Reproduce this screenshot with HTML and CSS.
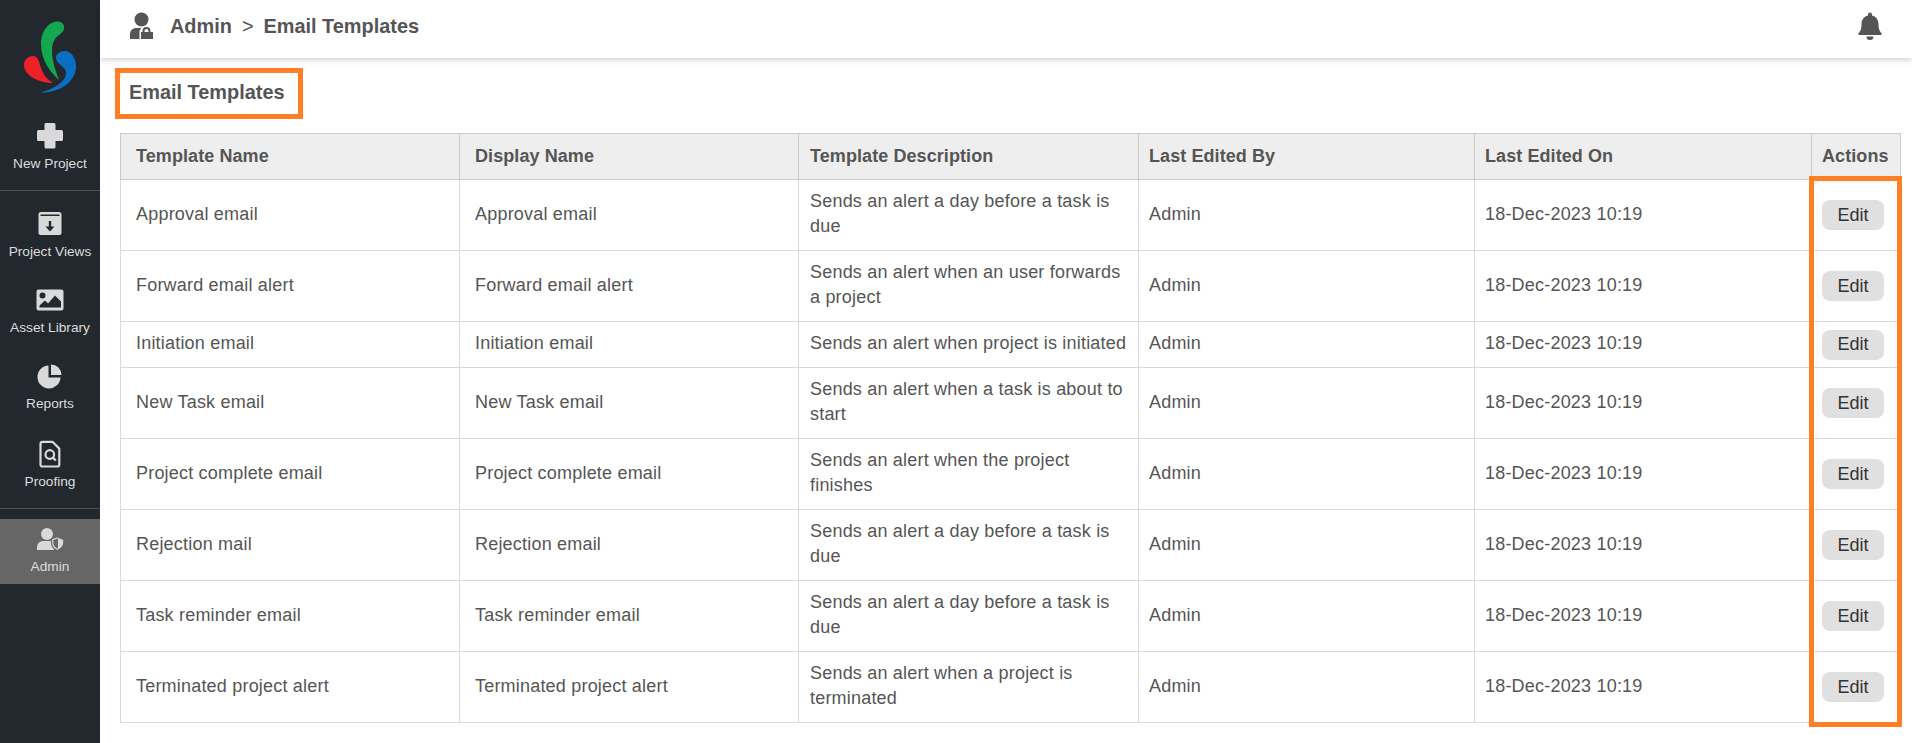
FILE: index.html
```html
<!DOCTYPE html>
<html lang="en">
<head>
<meta charset="utf-8">
<title>Email Templates</title>
<link rel="stylesheet" href="styles.css">
</head>
<body>
<div class="app">
  <aside class="sidebar">
    <div class="logo">
      <svg width="100" height="100" viewBox="0 0 100 100">
        <path fill="#13a84f" d="M58 21.500C62 21.500 65 25 64 29C63 33 58 35 55 39C50 46 51 60 59 80C50 72 41 60 41 44C41 32 48 21.500 58 21.500Z"/>
        <path fill="#ee2128" d="M24 65C24 59 29 56 33 56C37 56 39 60 40 65C42 72 46 79 53 83C40 83 24 76 24 65Z"/>
        <path fill="#0a6fc0" d="M56 57C57 52 62 51 66 51C72 52 76 59 76 66C76 82 60 93 40 92.500C52 90 66 82 66 73C66 66 55 64 56 57Z"/>
      </svg>
    </div>
    <a class="nav-item new">
      <svg class="nav-icon" width="28" height="28" viewBox="0 0 28 28"><path fill="#d9d9d9" d="M10 1h8a1.500 1.500 0 0 1 1.500 1.500V8h6A1.500 1.500 0 0 1 27 9.500v8a1.500 1.500 0 0 1-1.500 1.500h-6v6a1.500 1.500 0 0 1-1.500 1.500h-8A1.500 1.500 0 0 1 8.500 25v-6h-6A1.500 1.500 0 0 1 1 17.500v-8A1.500 1.500 0 0 1 2.500 8h6V2.500A1.500 1.500 0 0 1 10 1Z"/></svg>
      <span class="nav-label">New Project</span>
    </a>
    <div class="nav-group">
      <a class="nav-item">
        <svg class="nav-icon" width="28" height="28" viewBox="0 0 28 28"><path fill="#d9d9d9" d="M5 2h18a2.500 2.500 0 0 1 2.500 2.500V8h-23V4.500A2.500 2.500 0 0 1 5 2Z"/><path fill="#23282f" d="M4.500 4.500h19V6h-19z"/><path fill="#d9d9d9" fill-rule="evenodd" d="M2.500 8h23v15a2 2 0 0 1-2 2h-19a2 2 0 0 1-2-2ZM12.800 11v5.500H9.500l4.500 5 4.500-5h-3.300V11Z"/></svg>
        <span class="nav-label">Project Views</span>
      </a>
      <a class="nav-item">
        <svg class="nav-icon" width="28" height="28" viewBox="0 0 28 28"><path fill="#d9d9d9" fill-rule="evenodd" d="M2.500 3.500h23A2 2 0 0 1 27.500 5.500v17a2 2 0 0 1-2 2h-23a2 2 0 0 1-2-2v-17a2 2 0 0 1 2-2ZM6.500 6.500a3 3 0 1 0 0 6a3 3 0 0 0 0-6ZM3.500 21.500h21.500v-6l-6-6-7 8-3-3-5.500 5Z"/></svg>
        <span class="nav-label">Asset Library</span>
      </a>
      <a class="nav-item">
        <svg class="nav-icon" width="28" height="28" viewBox="0 0 28 28"><path fill="#d9d9d9" d="M12.500 3.500A11.500 11.500 0 1 0 24.500 15.500H12.500ZM15 2.500V13H25.500A10.500 10.500 0 0 0 15 2.500Z"/></svg>
        <span class="nav-label">Reports</span>
      </a>
      <a class="nav-item proofing">
        <svg class="nav-icon" width="28" height="28" viewBox="0 0 28 28"><path fill="none" stroke="#d9d9d9" stroke-width="2.200" stroke-linejoin="round" d="M6.500 1.800h10l6.800 6.800v15.900a2 2 0 0 1-2 2H6.500a2 2 0 0 1-2-2V3.800a2 2 0 0 1 2-2Z"/><circle cx="13.800" cy="14.500" r="4.300" fill="none" stroke="#d9d9d9" stroke-width="2.200"/><path stroke="#d9d9d9" stroke-width="2.400" d="M16.800 17.500l3 3"/></svg>
        <span class="nav-label">Proofing</span>
      </a>
    </div>
    <a class="nav-item active">
      <svg class="nav-icon" width="28" height="24" viewBox="0 0 28 24"><circle cx="11" cy="7" r="6" fill="#d9d9d9"/><path fill="#d9d9d9" d="M1 23v-3a6 6 0 0 1 6-6h8a6 6 0 0 1 3 .8V23Z"/><path fill="#666666" d="M22 9l7 2.500v4c0 4.500-3 7.500-7 9-4-1.500-7-4.500-7-9v-4Z"/><path fill="#d9d9d9" d="M22 11l5.200 1.800v2.700c0 3.300-2.200 5.700-5.200 7Z"/><path fill="none" stroke="#d9d9d9" stroke-width="1.200" d="M22 10.800l-5.300 1.900v2.800c0 3.400 2.200 5.800 5.300 7.100"/></svg>
      <span class="nav-label">Admin</span>
    </a>
  </aside>
  <div class="main">
    <header class="topbar">
      <div class="crumbs">
        <svg class="crumb-icon" width="24" height="28" viewBox="0 0 24 28"><circle cx="11.500" cy="7.500" r="7" fill="#555"/><path fill="#555" d="M0 27v-5c0-3.500 3-6 6-6h5.500c-1.300 1.200-2 2.500-2 4v7Z"/><path fill="#555" fill-rule="evenodd" d="M11 20h1.500v-1a4 4 0 0 1 8 0v1H23v7H11ZM14.500 20h4v-1a2 2 0 0 0-4 0Z"/></svg>
        <span>Admin</span><span class="sep">&gt;</span><span>Email Templates</span>
      </div>
      <svg class="bell" width="24" height="28" viewBox="0 0 24 28"><path fill="#555" d="M12 .500a2 2 0 0 1 2 2v1c4 .9 6.500 4.200 6.500 8.500 0 5 1 7 3 9.200.5.600.2 1.800-.8 1.800H1.300c-1 0-1.300-1.200-.8-1.800 2-2.200 3-4.200 3-9.200 0-4.300 2.500-7.600 6.500-8.500v-1a2 2 0 0 1 2-2ZM8.500 24.500h7a3.500 3.500 0 0 1-7 0Z"/></svg>
    </header>
    <h1 class="page-title">Email Templates</h1>
    <table class="grid">
      <colgroup>
        <col class="c-1"><col class="c-1"><col class="c-3"><col class="c-4"><col class="c-5"><col class="c-6">
      </colgroup>
      <thead>
        <tr><th>Template Name</th><th>Display Name</th><th>Template Description</th><th>Last Edited By</th><th>Last Edited On</th><th>Actions</th></tr>
      </thead>
      <tbody>
        <tr><td>Approval email</td><td>Approval email</td><td>Sends an alert a day before a task is due</td><td>Admin</td><td>18-Dec-2023 10:19</td><td><button class="edit">Edit</button></td></tr>
        <tr><td>Forward email alert</td><td>Forward email alert</td><td>Sends an alert when an user forwards a project</td><td>Admin</td><td>18-Dec-2023 10:19</td><td><button class="edit">Edit</button></td></tr>
        <tr><td>Initiation email</td><td>Initiation email</td><td>Sends an alert when project is initiated</td><td>Admin</td><td>18-Dec-2023 10:19</td><td><button class="edit">Edit</button></td></tr>
        <tr><td>New Task email</td><td>New Task email</td><td>Sends an alert when a task is about to start</td><td>Admin</td><td>18-Dec-2023 10:19</td><td><button class="edit">Edit</button></td></tr>
        <tr><td>Project complete email</td><td>Project complete email</td><td>Sends an alert when the project finishes</td><td>Admin</td><td>18-Dec-2023 10:19</td><td><button class="edit">Edit</button></td></tr>
        <tr><td>Rejection mail</td><td>Rejection email</td><td>Sends an alert a day before a task is due</td><td>Admin</td><td>18-Dec-2023 10:19</td><td><button class="edit">Edit</button></td></tr>
        <tr><td>Task reminder email</td><td>Task reminder email</td><td>Sends an alert a day before a task is due</td><td>Admin</td><td>18-Dec-2023 10:19</td><td><button class="edit">Edit</button></td></tr>
        <tr><td>Terminated project alert</td><td>Terminated project alert</td><td>Sends an alert when a project is terminated</td><td>Admin</td><td>18-Dec-2023 10:19</td><td><button class="edit">Edit</button></td></tr>
      </tbody>
    </table>
    <div class="callout callout-title"></div>
    <div class="callout callout-actions"></div>
  </div>
</div>
</body>
</html>
```
FILE: styles.css
```css
* { box-sizing: border-box; }
html, body { margin: 0; padding: 0; height: 100%; overflow: hidden; }
body { font-family: "Liberation Sans", Arial, sans-serif; color: #555; background: #fff; }
.app { display: flex; height: 743px; }

.sidebar { width: 100px; flex: none; background: #23282f; display: flex; flex-direction: column; }
.logo { height: 100px; flex: none; }
.logo svg { display: block; }
.nav-item { display: flex; flex-direction: column; align-items: center; height: 76px; padding-top: 5px; flex: none; }
.nav-icon { display: block; height: 28px; flex: none; }
.nav-label { margin-top: 6px; font-size: 13.700px; line-height: 16px; color: #dcdcdc; white-space: nowrap; }
.new { height: 90px; padding-top: 22px; }
.nav-group { border-top: 1px solid #4d5259; border-bottom: 1px solid #4d5259; padding-top: 14px; height: 319px; flex: none; }
.proofing { padding-top: 7px; }
.active { background: #666; height: 65px; margin-top: 10px; padding-top: 8px; }
.active .nav-icon { height: 24px; }
.active .nav-label { margin-top: 8px; }

.main { flex: 1; min-width: 0; position: relative; }
.topbar { height: 58px; display: flex; align-items: center; justify-content: space-between; padding: 0 30px 6px 30px; box-shadow: 0 2px 6px rgba(0,0,0,.18); background: #fff; }
.crumbs { display: flex; align-items: center; font-size: 19.900px; font-weight: 700; color: #555; }
.crumb-icon { margin-right: 16px; }
.sep { margin: 0 10px; font-weight: 400; }
.page-title { margin: 0; padding: 24px 0 0 29px; height: 75px; font-size: 19.900px; line-height: 21px; font-weight: 700; color: #555; }
.grid { margin-left: 20px; width: 1780px; table-layout: fixed; border-collapse: collapse; font-size: 18px; line-height: 25px; }
.grid col.c-1 { width: 339px; }
.grid col.c-3 { width: 340px; }
.grid col.c-4 { width: 336px; }
.grid col.c-5 { width: 337px; }
.grid col.c-6 { width: 89px; }
.grid th { height: 46px; padding: 0 10px; text-align: left; background: #eee; border: 1px solid #ccc; color: #555; font-weight: 700; letter-spacing: .08px; white-space: nowrap; }
.grid td { height: 46px; padding: 9px 10px 11px; border: 1px solid #d9d9d9; vertical-align: middle; letter-spacing: .2px; }
.grid th:nth-child(-n+2), .grid td:nth-child(-n+2) { padding-left: 15px; }
.grid th:nth-child(3), .grid td:nth-child(3) { padding-left: 11px; padding-right: 11px; }
.grid td:last-child { padding-top: 0; padding-bottom: 0; }
.edit { display: block; width: 62px; height: 30px; padding: 0; border: 0; border-radius: 8px; background: #e0e0e0; color: #333; font-family: inherit; font-size: 18px; }

.callout { position: absolute; border: 5px solid #ff7f27; pointer-events: none; }
.callout-title { left: 15px; top: 68px; width: 188px; height: 51px; }
.callout-actions { left: 1709px; top: 176px; width: 93px; height: 551px; }
```
